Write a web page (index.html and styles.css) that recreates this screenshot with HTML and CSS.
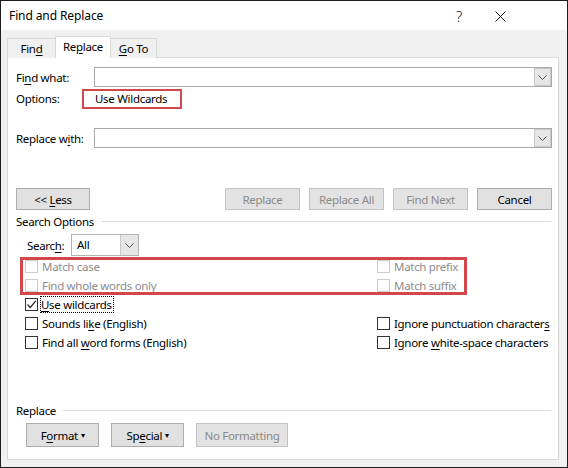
FILE: index.html
```html
<!DOCTYPE html>
<html lang="en">
<head>
    <meta charset="UTF-8">
    <meta name="viewport" content="width=device-width, initial-scale=1.0">
    <title>Find and Replace</title>
    <link rel="stylesheet" href="styles.css">
</head>
<body>
    <div class="window">
        <div class="titlebar">
            <span class="title">Find and Replace</span>
            <span class="help">?</span>
            <span class="close">
                <svg width="11" height="11" viewBox="0 0 11 11"><path d="M0.5 0.5 L10.5 10.5 M10.5 0.5 L0.5 10.5" stroke="#111" stroke-width="1" fill="none"/></svg>
            </span>
        </div>

        <div class="body">
            <div class="tabs">
                <div class="tab">Fin<u>d</u></div>
                <div class="tab active">Re<u>p</u>lace</div>
                <div class="tab"><u>G</u>o To</div>
            </div>

            <div class="panel">
                <div class="field-row">
                    <span class="field-label">Fi<u>n</u>d what:</span>
                    <div class="combo">
                        <span class="drop-btn"><svg width="9" height="5" viewBox="0 0 9 5"><path d="M0.5 0.5 L4.5 4.5 L8.5 0.5" stroke="#555" fill="none"/></svg></span>
                    </div>
                </div>

                <div class="options-row">
                    <span class="options-label">Options:</span>
                    <span class="mark">Use Wildcards</span>
                </div>

                <div class="field-row replace-row">
                    <span class="field-label">Replace w<u>i</u>th:</span>
                    <div class="combo">
                        <span class="drop-btn"><svg width="9" height="5" viewBox="0 0 9 5"><path d="M0.5 0.5 L4.5 4.5 L8.5 0.5" stroke="#555" fill="none"/></svg></span>
                    </div>
                </div>

                <div class="button-row">
                    <button class="btn">&lt;&lt; <u>L</u>ess</button>
                    <div class="spacer"></div>
                    <button class="btn disabled">Replace</button>
                    <button class="btn disabled">Replace All</button>
                    <button class="btn disabled">Find Next</button>
                    <button class="btn">Cancel</button>
                </div>

                <div class="section-head"><span>Search Options</span></div>

                <div class="search-row">
                    <span class="search-label">Searc<u>h</u>:</span>
                    <div class="select">
                        <span class="select-text">All</span>
                        <span class="drop-btn"><svg width="9" height="5" viewBox="0 0 9 5"><path d="M0.5 0.5 L4.5 4.5 L8.5 0.5" stroke="#555" fill="none"/></svg></span>
                    </div>
                </div>

                <div class="mark-box">
                    <div class="check-grid">
                        <div class="check disabled"><span class="box"></span><span>Match case</span></div>
                        <div class="check disabled"><span class="box"></span><span>Match prefix</span></div>
                        <div class="check disabled"><span class="box"></span><span>Find whole words only</span></div>
                        <div class="check disabled"><span class="box"></span><span>Match suffix</span></div>
                    </div>
                </div>

                <div class="check-grid plain">
                    <div class="check"><span class="box"><svg width="11" height="11" viewBox="0 0 11 11"><path d="M1.5 5.5 L4.2 8.5 L9.8 1.8" stroke="#222" stroke-width="1.2" fill="none"/></svg></span><span class="focus"><u>U</u>se wildcards</span></div>
                    <div></div>
                    <div class="check"><span class="box"></span><span>Sounds li<u>k</u>e (English)</span></div>
                    <div class="check"><span class="box"></span><span>Ignore punctuation character<u>s</u></span></div>
                    <div class="check"><span class="box"></span><span>Find all <u>w</u>ord forms (English)</span></div>
                    <div class="check"><span class="box"></span><span>Ignore <u>w</u>hite-space characters</span></div>
                </div>

                <div class="section-head replace-head"><span>Replace</span></div>

                <div class="bottom-row">
                    <button class="btn tall">F<u>o</u>rmat <span class="caret">&#9662;</span></button>
                    <button class="btn tall">Sp<u>e</u>cial <span class="caret">&#9662;</span></button>
                    <button class="btn tall disabled wide">No Formatting</button>
                </div>
            </div>
        </div>
    </div>
</body>
</html>
```

FILE: styles.css
```css
* {
    box-sizing: border-box;
}
body {
    margin: 0;
    font-family: "Noto Sans", "Open Sans", sans-serif;
    font-size: 11.5px;
    letter-spacing: -0.3px;
    color: #000;
    background: #fff;
}
u {
    text-underline-offset: 2px;
}
.window {
    width: 568px;
    height: 468px;
    border: 1px solid #1e1e1e;
    overflow: hidden;
    display: flex;
    flex-direction: column;
}
.titlebar {
    height: 29px;
    background: #fff;
    display: flex;
    align-items: center;
    padding-left: 8px;
}
.title {
    flex: 1;
    font-size: 12px;
    letter-spacing: -0.1px;
}
.help {
    font-size: 15px;
    font-weight: 300;
    color: #222;
    margin-right: 33px;
}
.close {
    display: flex;
    margin-right: 61px;
    margin-top: 1px;
}
.body {
    flex: 1;
    background: #f0f0f0;
    padding: 7px 8px 0 6px;
}
.tabs {
    display: flex;
    align-items: flex-end;
    height: 21px;
    margin-bottom: -1px;
    position: relative;
    z-index: 1;
}
.tab {
    height: 20px;
    line-height: 19px;
    border: 1px solid #d9d9d9;
    border-bottom: none;
    background: #f0f0f0;
    text-align: center;
}
.tab:nth-child(1) {
    width: 48px;
    border-right: none;
}
.tab:nth-child(3) {
    width: 46px;
    border-left: none;
}
.tab.active {
    width: 56px;
    height: 22px;
    line-height: 20px;
    background: #fff;
}
.panel {
    height: 403px;
    background: #fff;
    border: 1px solid #d9d9d9;
    padding: 9px 6px 0 8px;
}
.field-row {
    display: flex;
    align-items: center;
    height: 20px;
}
.field-label {
    width: 78px;
}
.combo {
    flex: 1;
    height: 20px;
    border: 1px solid #a9a9a9;
    display: flex;
    justify-content: flex-end;
    background: #fff;
}
.drop-btn {
    width: 17px;
    border: 1px solid #c9c9c9;
    background: #e6e6e6;
    display: flex;
    align-items: center;
    justify-content: center;
}
.options-row {
    display: flex;
    align-items: center;
    height: 21px;
    margin-top: 1px;
}
.options-label {
    width: 66px;
}
.mark {
    width: 100px;
    height: 20px;
    border: 2px solid #d2474a;
    padding-left: 11px;
    line-height: 15px;
}
.replace-row {
    margin-top: 19px;
}
.button-row {
    display: flex;
    gap: 9px;
    margin-top: 40px;
}
.spacer {
    flex: 1;
}
.btn {
    width: 75px;
    height: 22px;
    padding: 0;
    font-family: inherit;
    font-size: 11.5px;
    letter-spacing: -0.3px;
    color: #000;
    background: #e1e1e1;
    border: 1px solid #adadad;
}
.btn:first-child {
    width: 74px;
}
.btn.disabled {
    color: #8a8a8a;
    background: #e3e3e3;
    border-color: #c4c4c4;
}
.section-head {
    display: flex;
    align-items: center;
    height: 16px;
    margin-top: 3px;
}
.section-head::after {
    content: "";
    flex: 1;
    height: 1px;
    background: #dcdcdc;
    margin-left: 7px;
    margin-right: 1px;
}
.search-row {
    display: flex;
    align-items: center;
    margin-top: 5px;
    padding-left: 11px;
}
.search-label {
    width: 44px;
}
.select {
    width: 68px;
    height: 22px;
    border: 1px solid #b4b4b4;
    display: flex;
}
.select-text {
    flex: 1;
    padding-left: 5px;
    line-height: 19px;
}
.select .drop-btn {
    width: 18px;
    border-width: 0 0 0 1px;
}
.mark-box {
    width: 447px;
    margin: 1px 0 0 4px;
    padding-left: 5px;
    outline: 3px solid #d2474a;
    outline-offset: -3px;
}
.check-grid {
    display: grid;
    grid-template-columns: 352px auto;
    grid-auto-rows: 19px;
}
.check-grid.plain {
    padding-left: 9px;
}
.check {
    display: flex;
    align-items: center;
    white-space: nowrap;
}
.box {
    width: 13px;
    height: 13px;
    border: 1px solid #333;
    background: #fff;
    margin-right: 4px;
    display: flex;
    align-items: center;
    justify-content: center;
}
.check.disabled {
    color: #8d8d8d;
}
.check.disabled .box {
    border-color: #cccccc;
}
.focus {
    outline: 1px dotted #000;
    outline-offset: 0;
    line-height: 15px;
    padding-right: 1px;
    margin-left: -1px;
}
.replace-head {
    margin-top: 50px;
}
.bottom-row {
    display: flex;
    gap: 12px;
    margin-top: 5px;
    padding-left: 10px;
}
.btn.tall {
    width: 73px;
    height: 24px;
}
.btn.wide {
    width: 92px;
}
.caret {
    font-size: 8px;
    vertical-align: 2px;
}
```
